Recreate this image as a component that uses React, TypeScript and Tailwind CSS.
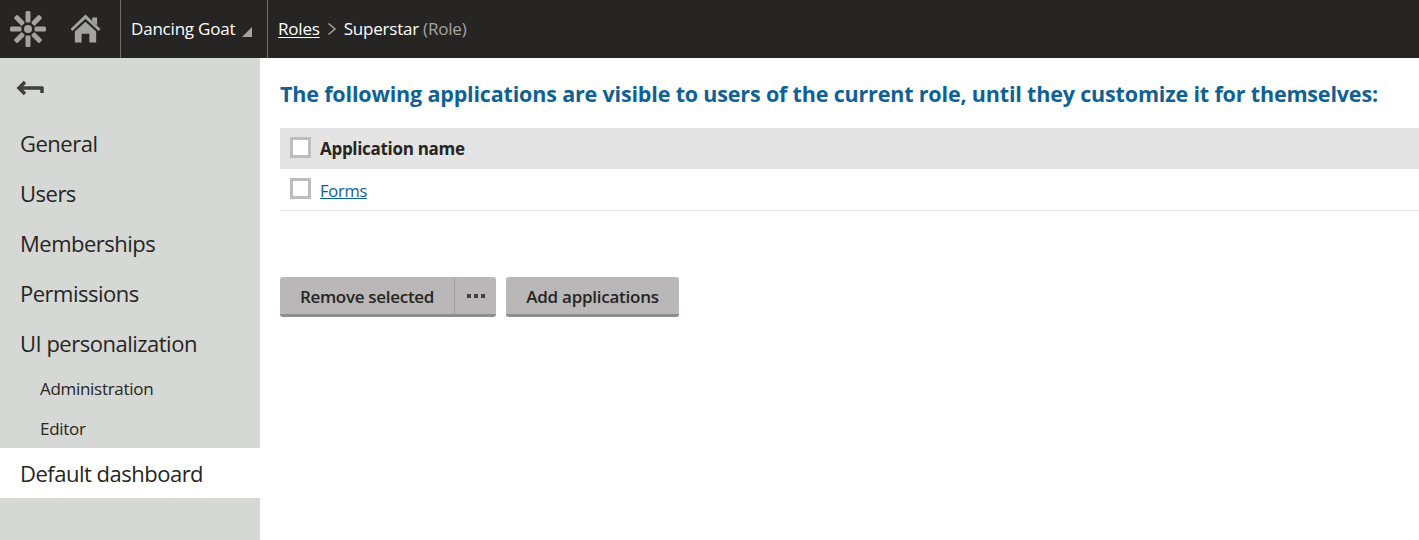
const font = "font-['Open_Sans','Noto_Sans',sans-serif]";

function Logo() {
  return (
    <svg width="36" height="36" viewBox="0 0 36 36" fill="#a3a3a3">
      <circle cx="18" cy="18" r="4" />
      {[0, 45, 90, 135, 180, 225, 270, 315].map((a) => (
        <rect key={a} x="15.500" y="0" width="5" height="11.500" rx="1.500" transform={`rotate(${a} 18 18)`} />
      ))}
    </svg>
  );
}

function Home() {
  return (
    <svg width="31" height="30" viewBox="0 0 32 30" fill="#a3a3a3">
      <path d="M23 3h5v8l-5-4z" />
      <path d="M16 0 L31.500 15 L29.500 17 L16 4.500 L2.500 17 L0.500 15 Z" />
      <path d="M16 7.500 L27 17.500 V29 H20 V20 H12 V29 H5 V17.500 Z" />
    </svg>
  );
}

function Box() {
  return <span className="block w-[21px] h-[21px] -mt-[2px] border-[3px] border-[#bdbdbd] bg-white" />;
}

const nav = ["General", "Users", "Memberships", "Permissions", "UI personalization"];

export default function App() {
  return (
    <div className={`${font} w-[1419px] h-[540px] flex flex-col overflow-hidden bg-white text-[#262524]`}>
      {/* Top bar */}
      <header className="h-[58px] shrink-0 flex items-stretch bg-[#262524] text-white">
        <div className="w-[121px] flex items-center border-r border-[#6f6f6f] pl-[10px] gap-[24px]">
          <Logo />
          <Home />
        </div>
        <div className="w-[147px] flex items-center border-r border-[#6f6f6f] pl-[10px] text-[17px] tracking-[-0.2px]">
          Dancing Goat
          <svg width="10" height="10" viewBox="0 0 10 10" className="ml-[7px] mt-[6px]" fill="#a3a3a3">
            <path d="M10 0v10H0z" />
          </svg>
        </div>
        <div className="flex items-center pl-[10px] text-[17px] tracking-[-0.2px]">
          <a className="underline underline-offset-2">Roles</a>
          <svg width="10" height="14" viewBox="0 0 10 14" className="mx-[7px]" fill="none" stroke="#a3a3a3" strokeWidth="1.500">
            <path d="M1.500 1.500 8 7l-6.500 5.500" />
          </svg>
          <span>Superstar</span>
          <span className="ml-[4px] text-[#a3a3a3]">(Role)</span>
        </div>
      </header>

      <div className="flex flex-1 min-h-0">
        {/* Sidebar */}
        <aside className="w-[260px] shrink-0 bg-[#d6d8d5] flex flex-col">
          <div className="h-[60px] flex items-center pl-[16px]">
            <svg width="28" height="18" viewBox="0 0 28 18" fill="none" stroke="#403f3d" strokeWidth="3.500">
              <path d="M27 9H3" />
              <path d="M9 3 3 9l6 6" />
              <path d="M26 8v6" />
            </svg>
          </div>
          {nav.map((n) => (
            <div key={n} className="h-[50px] flex items-center pl-[20px] text-[22px] tracking-[-0.5px]">{n}</div>
          ))}
          <div className="h-[40px] pt-[1px] flex items-center pl-[40px] text-[17px] tracking-[-0.3px]">Administration</div>
          <div className="h-[40px] pt-[1px] flex items-center pl-[40px] text-[17px] tracking-[-0.3px]">Editor</div>
          <div className="h-[50px] flex items-center pl-[20px] text-[22px] tracking-[-0.5px] bg-white">Default dashboard</div>
        </aside>

        {/* Content */}
        <main className="flex-1 pl-[20px] pt-[20px]">
          <h1 className="text-[21.500px] leading-[32px] font-bold text-[#0f6194] tracking-[-0.17px] whitespace-nowrap">
            The following applications are visible to users of the current role, until they customize it for themselves:
          </h1>
          <div className="mt-[18px] h-[41px] bg-[#e4e4e4] flex items-center pl-[10px] gap-[9px] font-bold text-[17px] tracking-[-0.3px]">
            <Box />
            Application name
          </div>
          <div className="h-[42px] border-b border-[#e4e4e4] flex items-center pl-[10px] gap-[9px] text-[16.500px] tracking-[-0.25px]">
            <Box />
            <a className="text-[#0f6194] underline mt-[3px]">Forms</a>
          </div>
          <div className="mt-[66px] flex gap-[10px]">
            <div className="flex h-[40px] rounded-[3px] bg-[#b9b7b7] border-b-[3px] border-[#8e8e8e] font-semibold text-[17px] tracking-[-0.3px]">
              <button className="w-[175px] pt-[2px] border-r border-[#9e9e9e]">Remove selected</button>
              <button className="w-[41px] flex items-center justify-center gap-[3px]">
                <span className="w-[4px] h-[4px] bg-[#403f3d]" />
                <span className="w-[4px] h-[4px] bg-[#403f3d]" />
                <span className="w-[4px] h-[4px] bg-[#403f3d]" />
              </button>
            </div>
            <button className="w-[173px] h-[40px] pt-[2px] rounded-[3px] bg-[#b9b7b7] border-b-[3px] border-[#8e8e8e] font-semibold text-[17px] tracking-[-0.25px]">
              Add applications
            </button>
          </div>
        </main>
      </div>
    </div>
  );
}
